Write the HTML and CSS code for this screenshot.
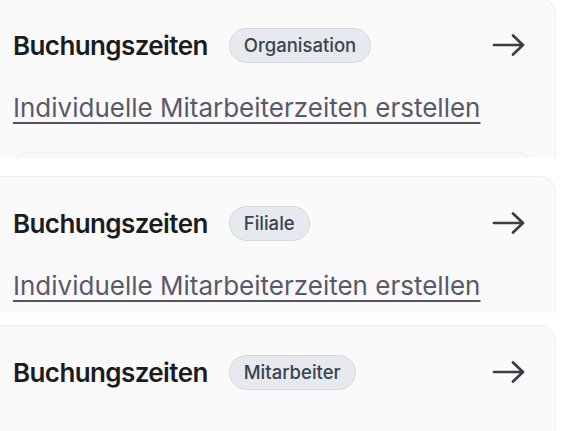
FILE: index.html
```html
<!DOCTYPE html>
<html lang="de">
<head>
<meta charset="utf-8">
<link rel="stylesheet" href="styles.css">
</head>
<body>
<div class="shots">
  <section class="frame frame-1">
    <div class="card card-first">
      <div class="head">
        <h2 class="title">Buchungszeiten</h2>
        <span class="badge">Organisation</span>
        <svg class="arrow" viewBox="0 0 34 24" width="34" height="24" aria-hidden="true"><path d="M2 12H31M21 2.5L31 12L21 21.5"/></svg>
      </div>
      <a class="link" href="#">Individuelle Mitarbeiterzeiten erstellen</a>
      <div class="inner"></div>
    </div>
  </section>
  <section class="frame frame-2">
    <div class="card">
      <div class="head">
        <h2 class="title">Buchungszeiten</h2>
        <span class="badge">Filiale</span>
        <svg class="arrow" viewBox="0 0 34 24" width="34" height="24" aria-hidden="true"><path d="M2 12H31M21 2.5L31 12L21 21.5"/></svg>
      </div>
      <a class="link" href="#">Individuelle Mitarbeiterzeiten erstellen</a>
    </div>
  </section>
  <section class="frame frame-3">
    <div class="card">
      <div class="head">
        <h2 class="title">Buchungszeiten</h2>
        <span class="badge">Mitarbeiter</span>
        <svg class="arrow" viewBox="0 0 34 24" width="34" height="24" aria-hidden="true"><path d="M2 12H31M21 2.5L31 12L21 21.5"/></svg>
      </div>
    </div>
  </section>
</div>
</body>
</html>
```

FILE: styles.css
```css
* { box-sizing: border-box; }
html, body {
  margin: 0;
  padding: 0;
  background: #ffffff;
  font-family: Inter, "Noto Sans", sans-serif;
  overflow: hidden;
}
.shots {
  display: flex;
  flex-direction: column;
  width: 561px;
  height: 431px;
}
.frame {
  overflow: hidden;
  flex: none;
}
.frame-1 { height: 158px; }
.frame-2 { height: 137px; margin-top: 18px; }
.frame-3 { flex: 1; margin-top: 12px; }

.card {
  width: 572px;
  margin-left: -16px;
  min-height: 200px;
  background: #fafafa;
  border: 1px solid #ececec;
  border-radius: 16px;
  padding: 0 29px 0 28px;
}
.card-first { margin-top: -2px; }

.head {
  display: flex;
  align-items: center;
  height: 92px;
}
.title {
  margin: 0;
  font-size: 26px;
  font-weight: 600;
  color: #1b1c1f;
  letter-spacing: -0.6px;
}
.badge {
  margin-left: 21px;
  height: 35px;
  display: inline-flex;
  align-items: center;
  padding: 0 14px;
  border-radius: 18px;
  background: #e6e9ed;
  border: 1px solid #d4d9df;
  color: #3a4350;
  font-size: 18.5px;
  font-weight: 500;
}
.arrow {
  margin-left: auto;
  fill: none;
  stroke: #3a3f45;
  stroke-width: 2.7;
  stroke-linecap: round;
  stroke-linejoin: round;
}
.link {
  display: inline-block;
  margin-top: 1px;
  font-size: 26px;
  line-height: 32px;
  color: #5c586b;
  text-decoration: underline;
  text-decoration-thickness: 2px;
  text-underline-offset: 5px;
  text-decoration-color: #55505f;
}
.inner {
  margin-top: 28px;
  margin-left: 1px;
  width: 517px;
  height: 60px;
  background: #f6f7f8;
  border: 1px solid #eceef1;
  border-radius: 12px;
}
```
